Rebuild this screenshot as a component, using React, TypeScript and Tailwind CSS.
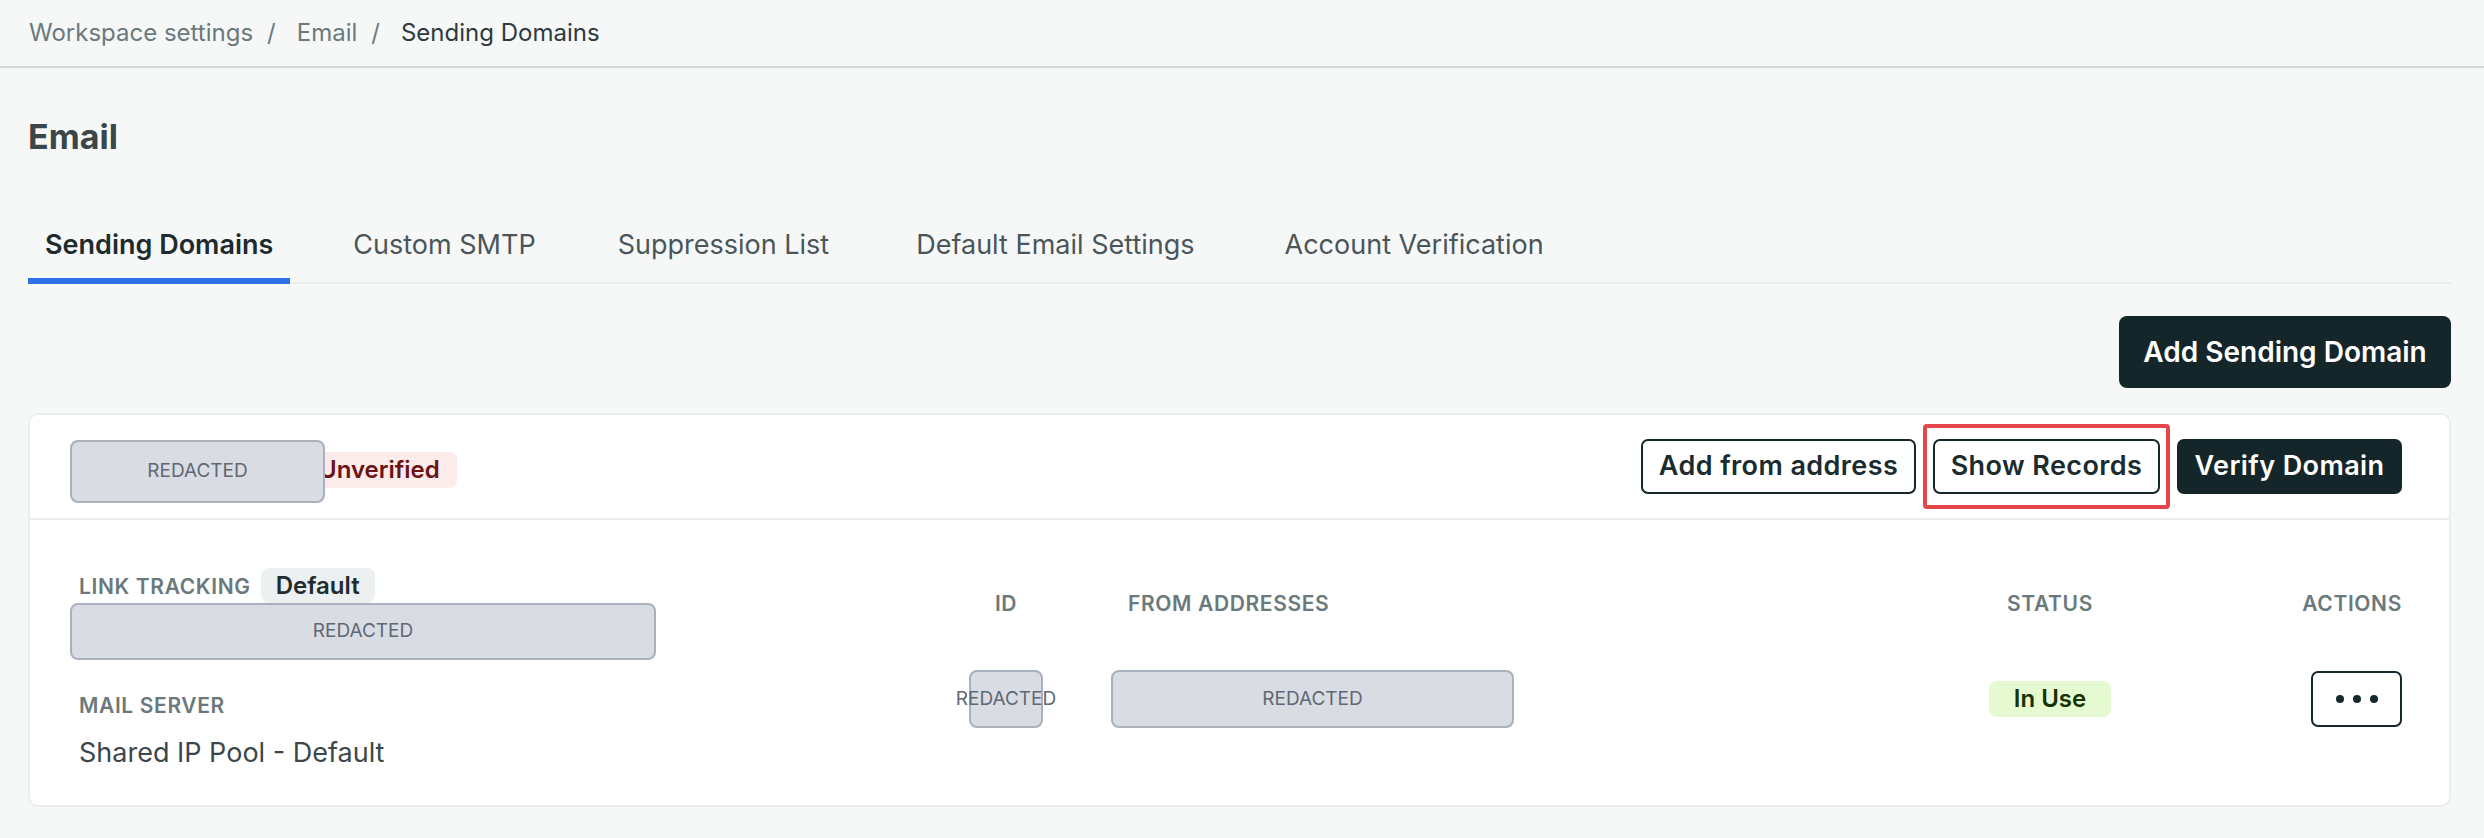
import { Fragment } from 'react';

const crumbs = ['Workspace settings', 'Email', 'Sending Domains'];
const tabs = [
  { label: 'Sending Domains', gap: '' },
  { label: 'Custom SMTP', gap: 'ml-[46px]' },
  { label: 'Suppression List', gap: 'ml-[48px]' },
  { label: 'Default Email Settings', gap: 'ml-[53px]' },
  { label: 'Account Verification', gap: 'ml-[56px]' },
];

function Redacted({ className }: { className: string }) {
  return (
    <div
      className={`flex items-center justify-center whitespace-nowrap rounded-[8px] border-2 border-[#a9b1bc] bg-[#d9dde3] text-[19px] text-[#5f6875] ${className}`}
    >
      REDACTED
    </div>
  );
}

const labelCls = 'text-[21px] font-semibold uppercase tracking-[0.03em] text-[#6b797d]';
const btnText = 'text-[27px] font-semibold tracking-[0.015em]';

export default function App() {
  return (
    <div className="min-h-screen bg-[#f6f8f8] font-['Inter',sans-serif] text-[#1d2a2e]">
      {/* breadcrumb */}
      <nav className="flex h-[68px] items-center border-b-2 border-[#d3d8da] pl-[29px] text-[24px]">
        {crumbs.map((c, i) => (
          <Fragment key={c}>
            {i > 0 && <span className="ml-[14px] mr-[21px] text-[#6b787c]">/</span>}
            <span className={i === crumbs.length - 1 ? 'text-[#2e3a3e]' : 'text-[#6b787c]'}>{c}</span>
          </Fragment>
        ))}
      </nav>

      <main className="pl-[28px] pr-[33px]">
        <h1 className="mt-[49px] text-[34px] font-bold leading-[40px] text-[#3a4649]">Email</h1>

        {/* tabs */}
        <div className="mt-[70px] flex border-b-2 border-[#eceeee]">
          {tabs.map((t, i) => (
            <button
              key={t.label}
              type="button"
              className={`-mb-[2px] border-b-[6px] px-[17px] pb-[15px] text-[27px] leading-[36px] ${t.gap} ${
                i === 0 ? 'border-[#2f6fe8] font-semibold text-[#1d2a2e]' : 'border-transparent text-[#4a5559]'
              }`}
            >
              {t.label}
            </button>
          ))}
        </div>

        <div className="mt-[32px] flex justify-end">
          <button
            type="button"
            className="h-[72px] w-[332px] rounded-[8px] bg-[#15262b] text-[28px] font-semibold text-white"
          >
            Add Sending Domain
          </button>
        </div>

        {/* domain card */}
        <section className="mt-[25px] rounded-[10px] border-2 border-[#eaeeee] bg-white">
          <header className="flex h-[105px] items-center border-b-2 border-[#eaeeee] pl-[40px] pr-[47px]">
            <Redacted className="relative z-10 mt-[10px] h-[63px] w-[255px]" />
            <span className="-ml-[18px] mt-[7px] flex h-[36px] items-center rounded-[8px] bg-[#fbeceb] pl-[12px] pr-[17px] text-[24px] font-semibold text-[#6a1414]">
              Unverified
            </span>
            <div className="ml-auto flex items-center gap-[17px]">
              <button
                type="button"
                className={`h-[55px] w-[275px] rounded-[7px] border-2 border-[#15272c] text-[#1b2c31] ${btnText}`}
              >
                Add from address
              </button>
              <div className="relative">
                <button
                  type="button"
                  className={`h-[55px] w-[227px] rounded-[7px] border-2 border-[#15272c] text-[#1b2c31] ${btnText}`}
                >
                  Show Records
                </button>
                <span className="pointer-events-none absolute -inset-x-[10px] -inset-y-[15px] rounded-[4px] border-[4px] border-[#e3474c]" />
              </div>
              <button type="button" className={`h-[55px] w-[225px] rounded-[7px] bg-[#15262b] text-white ${btnText}`}>
                Verify Domain
              </button>
            </div>
          </header>

          <div className="flex pb-[34px] pl-[49px] pr-[47px] pt-[48px]">
            {/* settings column */}
            <div className="w-[872px] shrink-0">
              <div className="flex h-[35px] items-center">
                <span className={`pt-[3px] ${labelCls}`}>Link Tracking</span>
                <span className="ml-[10px] flex h-[35px] items-center rounded-[8px] bg-[#edf0f0] px-[15px] text-[24px] font-semibold text-[#1f2b2f]">
                  Default
                </span>
              </div>
              <Redacted className="relative -ml-[9px] h-[57px] w-[586px]" />
              <div className={`mt-[32px] leading-[28px] ${labelCls}`}>Mail Server</div>
              <div className="mt-[15px] text-[27px] leading-[36px] text-[#3b474b]">Shared IP Pool - Default</div>
            </div>

            {/* addresses table */}
            <div className="grid flex-1 grid-cols-[110px_899px_180px_1fr] grid-rows-[72px_118px]">
              <div className={`flex items-center justify-center ${labelCls}`}>ID</div>
              <div className={`flex items-center pl-[67px] ${labelCls}`}>From Addresses</div>
              <div className={`flex items-center justify-center ${labelCls}`}>Status</div>
              <div className={`flex items-center justify-end ${labelCls}`}>Actions</div>

              <div className="flex items-center justify-center">
                <Redacted className="h-[58px] w-[74px]" />
              </div>
              <div className="flex items-center pl-[50px]">
                <Redacted className="h-[58px] w-[403px]" />
              </div>
              <div className="flex items-center justify-center">
                <span className="flex h-[36px] w-[122px] items-center justify-center rounded-[8px] bg-[#e6fad2] text-[24px] font-semibold text-[#163300]">
                  In Use
                </span>
              </div>
              <div className="flex items-center justify-end">
                <button
                  type="button"
                  className="flex h-[56px] w-[91px] items-center justify-center gap-[9px] rounded-[7px] border-2 border-[#15292e]"
                >
                  <span className="h-[8px] w-[8px] rounded-full bg-[#15292e]" />
                  <span className="h-[8px] w-[8px] rounded-full bg-[#15292e]" />
                  <span className="h-[8px] w-[8px] rounded-full bg-[#15292e]" />
                </button>
              </div>
            </div>
          </div>
        </section>
      </main>
    </div>
  );
}
